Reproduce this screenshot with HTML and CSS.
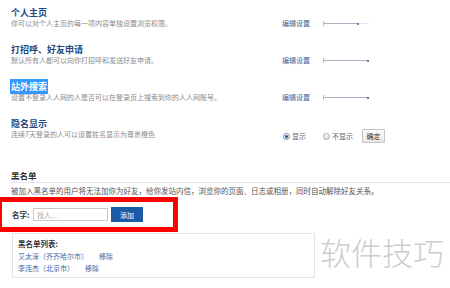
FILE: index.html
```html
<!DOCTYPE html>
<html lang="zh-CN">
<head>
    <meta charset="UTF-8">
    <title>隐私设置</title>
    <link rel="stylesheet" href="styles.css">
</head>
<body>
    <div class="page">
        <div class="setting">
            <div class="setting-info">
                <h3 class="setting-title">个人主页</h3>
                <p class="setting-desc">你可以对个人主页的每一项内容单独设置浏览权限。</p>
            </div>
            <div class="setting-ctrl">
                <a class="edit-link" href="#">编辑设置</a>
                <span class="slider slider-part"><span class="slider-dot"></span></span>
            </div>
        </div>

        <div class="setting">
            <div class="setting-info">
                <h3 class="setting-title">打招呼、好友申请</h3>
                <p class="setting-desc">默认所有人都可以向你打招呼和发送好友申请。</p>
            </div>
            <div class="setting-ctrl">
                <a class="edit-link" href="#">编辑设置</a>
                <span class="slider"><span class="slider-dot"></span></span>
            </div>
        </div>

        <div class="setting">
            <div class="setting-info">
                <h3 class="setting-title"><span class="selected">站外搜索</span></h3>
                <p class="setting-desc">设置不登录人人网的人是否可以在登录页上搜索到你的人人网账号。</p>
            </div>
            <div class="setting-ctrl">
                <a class="edit-link" href="#">编辑设置</a>
                <span class="slider"><span class="slider-dot"></span></span>
            </div>
        </div>

        <div class="setting">
            <div class="setting-info">
                <h3 class="setting-title">隐名显示</h3>
                <p class="setting-desc">连续7天登录的人可以设置姓名显示为尊贵橙色</p>
            </div>
            <div class="setting-ctrl radio-row">
                <label class="radio-label"><span class="radio checked"></span>显示</label>
                <label class="radio-label"><span class="radio"></span>不显示</label>
                <button class="btn-ok">确定</button>
            </div>
        </div>

        <div class="blacklist">
            <h3 class="blacklist-title">黑名单</h3>
            <p class="blacklist-desc">被加入黑名单的用户将无法加你为好友，给你发站内信，浏览你的页面、日志或相册，同时自动解除好友关系。</p>

            <div class="add-row">
                <span class="add-label">名字:</span>
                <input class="add-input" type="text" placeholder="找人...">
                <button class="btn-add">添加</button>
            </div>

            <div class="list-box">
                <div class="list-title">黑名单列表:</div>
                <div class="list-item"><a href="#">艾太深（齐齐哈尔市）</a><a class="remove" href="#">移除</a></div>
                <div class="list-item"><a href="#">李连杰（北京市）</a><a class="remove" href="#">移除</a></div>
            </div>
        </div>

        <div class="watermark">软件技巧</div>
    </div>
</body>
</html>
```

FILE: styles.css
```css
body {
    margin: 0;
    padding: 0;
    background-color: #ffffff;
    font-family: "Noto Sans CJK SC", "Noto Sans", sans-serif;
    overflow: hidden;
}

a {
    text-decoration: none;
}

.page {
    position: relative;
    width: 450px;
    height: 288px;
    padding-left: 11px;
    box-sizing: border-box;
}

/* settings rows */
.setting {
    display: flex;
    height: 37px;
    padding-top: 7px;
    box-sizing: border-box;
}

.setting-info {
    width: 270px;
}

.setting-title {
    margin: 0;
    font-size: 9px;
    line-height: 12px;
    font-weight: bold;
    color: #21497f;
}

.selected {
    background-color: #3399ff;
    color: #ffffff;
    padding: 1px 1px;
    margin-left: -1px;
}

.setting-desc {
    margin: 0;
    font-size: 7px;
    line-height: 9px;
    color: #8c8c8c;
    white-space: nowrap;
}

.setting-ctrl {
    display: flex;
    align-items: center;
    margin-top: 12px;
    height: 9px;
}

.edit-link {
    font-size: 7px;
    line-height: 9px;
    color: #3c5f94;
    margin-left: 1px;
}

.slider {
    position: relative;
    width: 46px;
    height: 1px;
    margin-left: 13px;
    background-color: #a9b3c4;
}

.slider::before {
    content: "";
    position: absolute;
    left: 0;
    top: -2px;
    width: 1px;
    height: 5px;
    background-color: #b4bccb;
}

.slider-dot {
    position: absolute;
    right: 0;
    top: -0.5px;
    width: 2px;
    height: 2px;
    border-radius: 50%;
    background-color: #4a5a7a;
}

.slider-part {
    background: linear-gradient(to right, #a9b3c4 0, #a9b3c4 35px, #e3e6ec 35px);
}

.slider-part .slider-dot {
    right: auto;
    left: 34px;
}

.radio-row {
    margin-top: 11px;
    height: 14px;
}

.radio-label {
    display: flex;
    align-items: center;
    font-size: 7px;
    color: #666666;
    margin-right: 9px;
}

.radio-label:first-child {
    margin-left: 2px;
    margin-right: 17px;
}

.radio {
    width: 5px;
    height: 5px;
    border: 1px solid #a8a8a8;
    border-radius: 50%;
    background: linear-gradient(#ffffff, #dcdcdc);
    margin-right: 2px;
    position: relative;
}

.radio.checked {
    border-color: #6f8fb0;
}

.radio.checked::after {
    content: "";
    position: absolute;
    left: 1px;
    top: 1px;
    width: 3px;
    height: 3px;
    border-radius: 50%;
    background-color: #24507e;
}

.btn-ok {
    height: 14px;
    width: 23px;
    padding: 0;
    font-family: inherit;
    font-size: 7px;
    color: #333333;
    background: linear-gradient(#fafafa, #e6e6e6);
    border: 1px solid #c4c4c4;
    border-radius: 1px;
}

/* blacklist */
.blacklist {
    margin-top: 21px;
}

.blacklist-title {
    margin: 0;
    font-size: 8.5px;
    line-height: 12px;
    font-weight: bold;
    color: #333333;
    border-bottom: 1px solid #e6e6e6;
    padding-bottom: 1px;
}

.blacklist-desc {
    margin: 3px 0 0;
    font-size: 7.5px;
    line-height: 10px;
    color: #555555;
    white-space: nowrap;
}

.add-row {
    display: flex;
    align-items: center;
    width: 161px;
    height: 25px;
    margin: 1px 0 0 -14px;
    padding-left: 10px;
    border: 5px solid #ff0000;
}

.add-label {
    font-size: 7.5px;
    font-weight: bold;
    color: #333333;
    width: 21px;
}

.add-input {
    width: 75px;
    height: 13px;
    box-sizing: border-box;
    border: 1px solid #c8c8c8;
    padding: 0 3px;
    font-family: inherit;
    font-size: 7px;
    outline: none;
}

.add-input::placeholder {
    color: #a8a8a8;
}

.btn-add {
    width: 32px;
    height: 15px;
    margin-left: 3px;
    padding: 0;
    border: none;
    background-color: #1b5aa5;
    color: #ffffff;
    font-family: inherit;
    font-size: 7px;
}

.list-box {
    width: 303px;
    margin-top: 1px;
    margin-left: 1px;
    padding: 4px 5px 3px;
    border: 1px solid #e4e4e4;
    box-sizing: border-box;
}

.list-title {
    font-size: 7.5px;
    line-height: 12px;
    font-weight: bold;
    color: #333333;
}

.list-item {
    font-size: 7px;
    line-height: 12px;
}

.list-item a {
    color: #4068a0;
}

.list-item .remove {
    margin-left: 11px;
}

.watermark {
    position: absolute;
    left: 320px;
    top: 236px;
    font-size: 31px;
    line-height: 1;
    color: #cdcdcd;
    font-weight: 300;
    letter-spacing: 0;
}
```
